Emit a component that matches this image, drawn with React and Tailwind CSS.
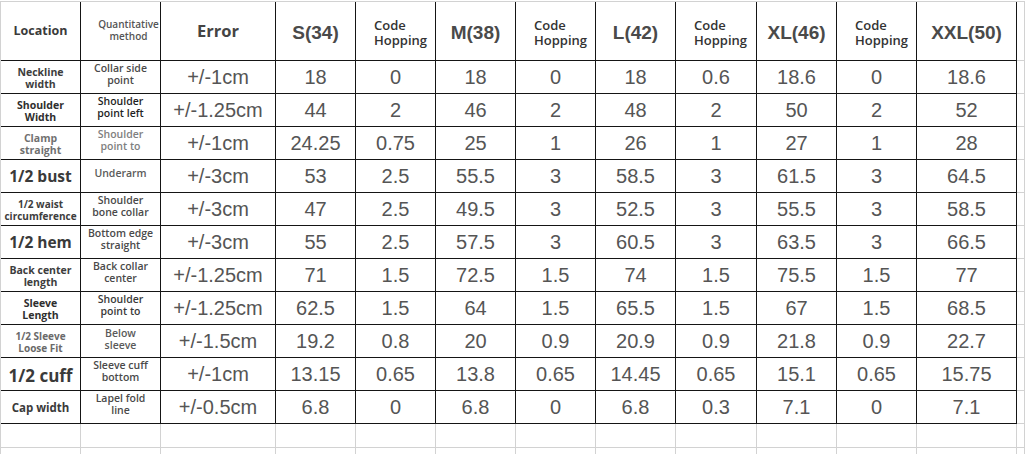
import React from 'react';

const OPEN = "[font-family:'Open_Sans',sans-serif]";
const ARIAL = "[font-family:'Liberation_Sans',Arial,sans-serif]";

const rows = [
  { loc: ['Neckline', 'width'], locCls: 'text-[10.5px] text-[#3d3d3d]', method: ['Collar side', 'point'], mCls: 'text-[#4a4a4a]', err: '+/-1cm', vals: ['18', '0', '18', '0', '18', '0.6', '18.6', '0', '18.6'] },
  { loc: ['Shoulder', 'Width'], locCls: 'text-[10.5px] text-[#2e2e2e]', method: ['Shoulder', 'point left'], mCls: 'text-[#1f1f1f] font-bold', err: '+/-1.25cm', vals: ['44', '2', '46', '2', '48', '2', '50', '2', '52'] },
  { loc: ['Clamp', 'straight'], locCls: 'text-[10.5px] text-[#707070]', method: ['Shoulder', 'point to'], mCls: 'text-[#808080]', err: '+/-1cm', vals: ['24.25', '0.75', '25', '1', '26', '1', '27', '1', '28'] },
  { loc: ['1/2 bust'], locCls: 'text-[15.5px] text-[#3a3a3a]', method: ['Underarm'], mCls: 'text-[#5a5a5a] pt-[7px]', err: '+/-3cm', vals: ['53', '2.5', '55.5', '3', '58.5', '3', '61.5', '3', '64.5'] },
  { loc: ['1/2 waist', 'circumference'], locCls: 'text-[10px] text-[#3d3d3d]', method: ['Shoulder', 'bone collar'], mCls: 'text-[#4a4a4a]', err: '+/-3cm', vals: ['47', '2.5', '49.5', '3', '52.5', '3', '55.5', '3', '58.5'] },
  { loc: ['1/2 hem'], locCls: 'text-[15.5px] text-[#3a3a3a]', method: ['Bottom edge', 'straight'], mCls: 'text-[#4a4a4a]', err: '+/-3cm', vals: ['55', '2.5', '57.5', '3', '60.5', '3', '63.5', '3', '66.5'] },
  { loc: ['Back center', 'length'], locCls: 'text-[10.5px] text-[#3d3d3d]', method: ['Back collar', 'center'], mCls: 'text-[#4a4a4a]', err: '+/-1.25cm', vals: ['71', '1.5', '72.5', '1.5', '74', '1.5', '75.5', '1.5', '77'] },
  { loc: ['Sleeve', 'Length'], locCls: 'text-[10.5px] text-[#2e2e2e]', method: ['Shoulder', 'point to'], mCls: 'text-[#3a3a3a]', err: '+/-1.25cm', vals: ['62.5', '1.5', '64', '1.5', '65.5', '1.5', '67', '1.5', '68.5'] },
  { loc: ['1/2 Sleeve', 'Loose Fit'], locCls: 'text-[10px] text-[#6a6a6a]', method: ['Below', 'sleeve'], mCls: 'text-[#5a5a5a] pt-[2px]', err: '+/-1.5cm', vals: ['19.2', '0.8', '20', '0.9', '20.9', '0.9', '21.8', '0.9', '22.7'] },
  { loc: ['1/2 cuff'], locCls: 'text-[17px] text-[#3a3a3a]', method: ['Sleeve cuff', 'bottom'], mCls: 'text-[#4a4a4a]', err: '+/-1cm', vals: ['13.15', '0.65', '13.8', '0.65', '14.45', '0.65', '15.1', '0.65', '15.75'] },
  { loc: ['Cap width'], locCls: 'text-[11.5px] text-[#3a3a3a]', method: ['Lapel fold', 'line'], mCls: 'text-[#4a4a4a]', err: '+/-0.5cm', vals: ['6.8', '0', '6.8', '0', '6.8', '0.3', '7.1', '0', '7.1'] },
];

const sizes = ['S(34)', 'M(38)', 'L(42)', 'XL(46)', 'XXL(50)'];

function Cell({ className = '', children }) {
  return (
    <div className={`border-r border-b border-[#151515] overflow-hidden ${className}`}>
      {children}
    </div>
  );
}

function Grey() {
  return <div className="border-r border-b border-[#d2d2d2]" />;
}

export default function App() {
  return (
    <div className="h-[454px] w-[1025px] overflow-hidden bg-white pt-[1px]">
      <div className="grid grid-cols-[80px_80px_115px_80px_80px_80px_80px_80px_81px_80px_80px_100px_8px] grid-rows-[59px_repeat(11,33px)_24px_24px] border-t border-l border-[#d2d2d2]">
        {/* header */}
        <Cell className={`flex items-center justify-center font-bold text-[12.5px] text-[#3a3a3a] ${OPEN}`}>
          Location
        </Cell>
        <Cell className={`flex items-center justify-center pl-[16px] pb-[2px] text-center font-semibold text-[10px] leading-[12px] text-[#555] whitespace-nowrap ${OPEN}`}>
          <p>
            Quantitative
            <br />
            method
          </p>
        </Cell>
        <Cell className={`flex items-center justify-center font-bold text-[16.5px] text-[#444] ${OPEN}`}>
          Error
        </Cell>
        {sizes.map((s, i) => (
          <React.Fragment key={s}>
            <Cell className={`flex items-center justify-center pt-[4px] font-bold text-[19px] text-[#4a4a4a] ${ARIAL}`}>
              {s}
            </Cell>
            {i < 4 && (
              <Cell className={`flex items-center pl-[18px] pt-[4px] font-semibold text-[13px] leading-[15px] text-[#333] ${OPEN}`}>
                <p>
                  Code
                  <br />
                  Hopping
                </p>
              </Cell>
            )}
          </React.Fragment>
        ))}
        <Grey />

        {/* body */}
        {rows.map((r) => (
          <React.Fragment key={r.loc.join(' ')}>
            <Cell className={`flex flex-col items-center justify-center pt-[2px] text-center font-bold leading-[12px] whitespace-nowrap ${OPEN} ${r.locCls}`}>
              {r.loc.map((l) => (
                <span key={l} className={r.loc.length === 1 ? 'leading-none' : ''}>{l}</span>
              ))}
            </Cell>
            <Cell className={`flex flex-col items-center pt-[1px] text-center font-semibold text-[10.5px] leading-[12px] whitespace-nowrap ${OPEN} ${r.mCls}`}>
              {r.method.map((l) => (
                <span key={l}>{l}</span>
              ))}
            </Cell>
            <Cell className={`flex items-center justify-center text-[20px] text-[#555] ${ARIAL}`}>
              {r.err}
            </Cell>
            {r.vals.map((v, i) => (
              <Cell key={i} className={`flex items-center justify-center text-[20px] text-[#555] ${ARIAL}`}>
                {v}
              </Cell>
            ))}
            <Grey />
          </React.Fragment>
        ))}

        {/* empty sheet rows */}
        {Array.from({ length: 26 }).map((_, i) => (
          <Grey key={i} />
        ))}
      </div>
    </div>
  );
}
